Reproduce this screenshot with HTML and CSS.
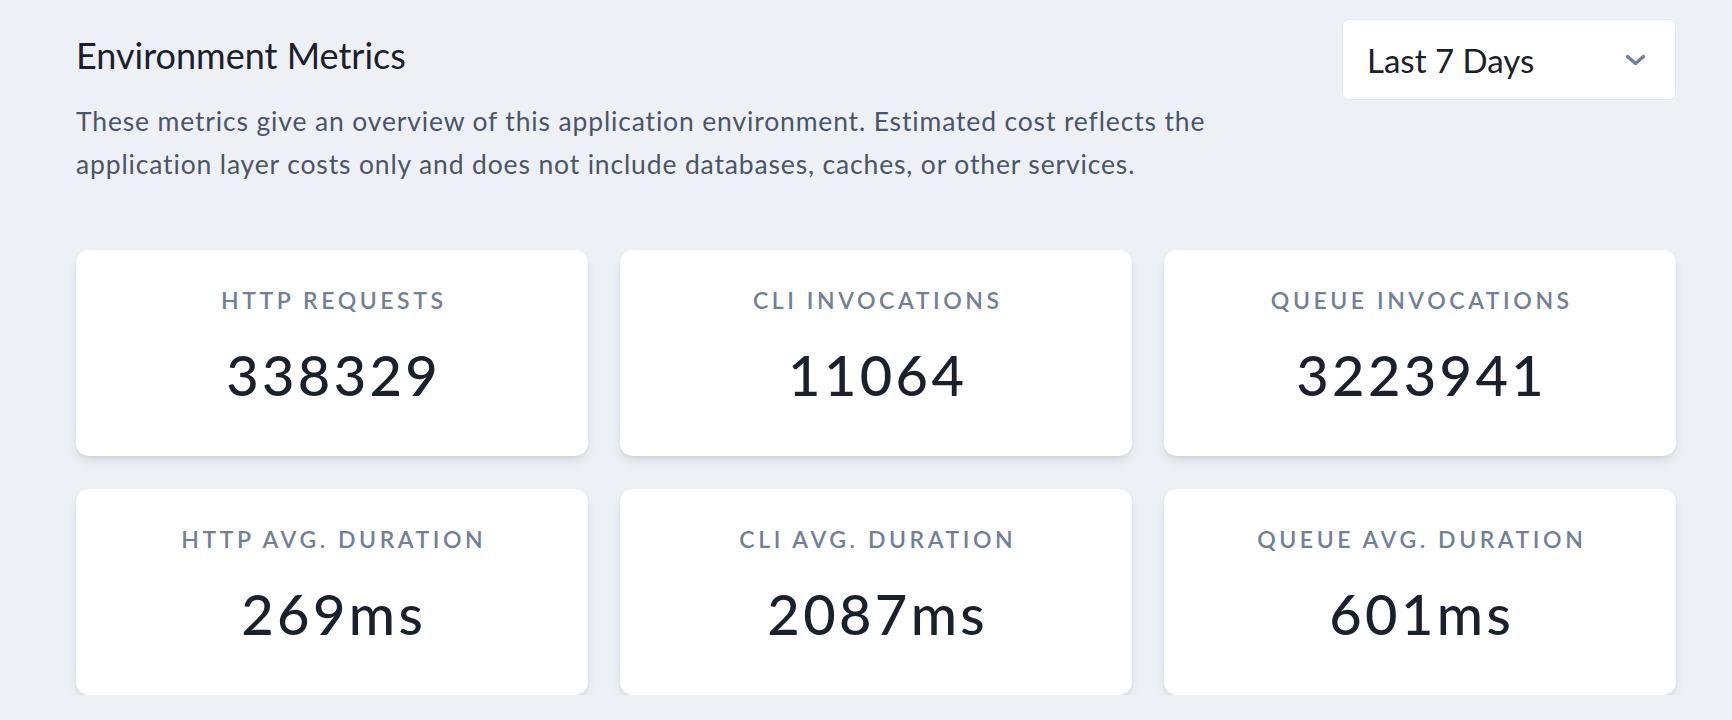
FILE: index.html
```html
<!DOCTYPE html>
<html lang="en">
<head>
<meta charset="utf-8">
<title>Environment Metrics</title>
<link rel="stylesheet" href="styles.css">
</head>
<body>
<main class="page">
  <header class="header">
    <div class="intro">
      <h2 class="title">Environment Metrics</h2>
      <p class="desc">These metrics give an overview of this application environment. Estimated cost reflects the application layer costs only and does not include databases, caches, or other services.</p>
    </div>
    <div class="select">
      <span class="select-label">Last 7 Days</span>
      <svg class="chevron" width="21" height="12" viewBox="0 0 21 12" aria-hidden="true"><polyline points="2.5,2.5 10.5,9.5 18.5,2.5" fill="none" stroke="#718096" stroke-width="3.4" stroke-linecap="round" stroke-linejoin="round"/></svg>
    </div>
  </header>
  <section class="grid">
    <div class="card"><div class="label">HTTP Requests</div><div class="value">338329</div></div>
    <div class="card"><div class="label">CLI Invocations</div><div class="value">11064</div></div>
    <div class="card"><div class="label">Queue Invocations</div><div class="value">3223941</div></div>
    <div class="card"><div class="label">HTTP Avg. Duration</div><div class="value">269ms</div></div>
    <div class="card"><div class="label">CLI Avg. Duration</div><div class="value">2087ms</div></div>
    <div class="card"><div class="label">Queue Avg. Duration</div><div class="value">601ms</div></div>
  </section>
</main>
</body>
</html>
```

FILE: styles.css
```css
* { box-sizing: border-box; }
html, body { margin: 0; padding: 0; }
body {
  background: #edf1f6;
  font-family: Lato, "Open Sans", "Noto Sans", sans-serif;
  color: #1a202c;
}
.page {
  padding: 19px 56px 0 76px;
}
.header {
  display: flex;
  justify-content: space-between;
  align-items: flex-start;
}
.intro {
  padding-top: 14px;
}
.title {
  margin: 0;
  font-size: 36px;
  line-height: 44px;
  font-weight: 400;
  color: #1a202c;
}
.desc {
  margin: 23px 0 0;
  max-width: 1200px;
  font-size: 26.5px;
  line-height: 42.6px;
  letter-spacing: 0.85px;
  color: #4a5568;
}
.select {
  width: 334px;
  height: 81px;
  background: #fff;
  border: 1px solid #e2e8f0;
  border-radius: 7px;
  display: flex;
  align-items: center;
  justify-content: space-between;
  padding: 0 29px 0 24px;
}
.select-label {
  font-size: 33px;
  color: #1a202c;
}
.chevron { display: block; }
.grid {
  margin-top: 65px;
  display: grid;
  grid-template-columns: repeat(3, 1fr);
  gap: 33px 32px;
}
.card {
  height: 206px;
  background: #fff;
  border-radius: 13px;
  box-shadow: 0 6px 12px -2px rgba(0,0,0,.10), 0 3px 7px -2px rgba(0,0,0,.07);
  display: flex;
  flex-direction: column;
  align-items: center;
  padding-top: 36px;
}
.label {
  font-size: 23px;
  line-height: 28px;
  font-weight: 600;
  letter-spacing: 0.155em;
  padding-left: 0.155em;
  text-transform: uppercase;
  color: #718096;
}
.value {
  margin-top: 29px;
  font-size: 56px;
  line-height: 64px;
  font-weight: 500;
  letter-spacing: 0.06em;
  padding-left: 0.06em;
  color: #1a202c;
}
```
